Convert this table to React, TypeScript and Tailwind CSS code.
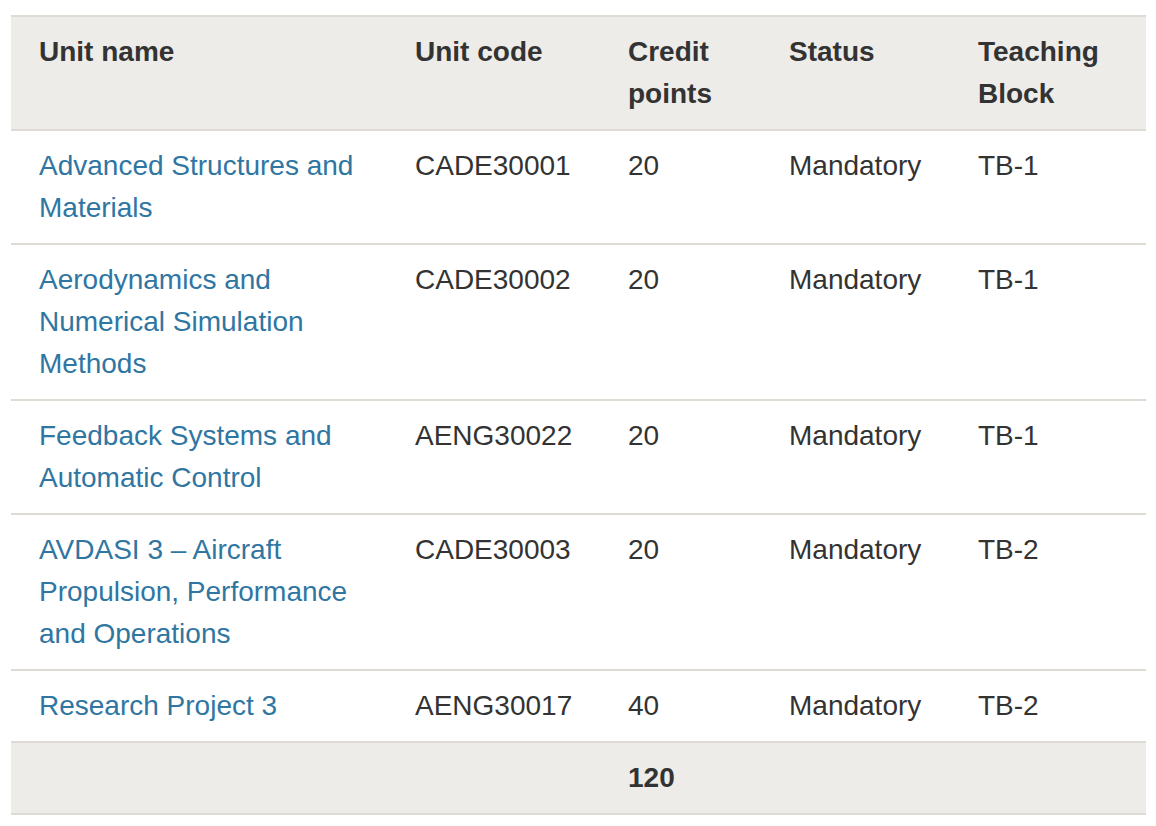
import React from "react";

type Unit = {
  name: string;
  code: string;
  credits: number;
  status: string;
  block: string;
};

const units: Unit[] = [
  { name: "Advanced Structures and Materials", code: "CADE30001", credits: 20, status: "Mandatory", block: "TB-1" },
  { name: "Aerodynamics and Numerical Simulation Methods", code: "CADE30002", credits: 20, status: "Mandatory", block: "TB-1" },
  { name: "Feedback Systems and Automatic Control", code: "AENG30022", credits: 20, status: "Mandatory", block: "TB-1" },
  { name: "AVDASI 3 \u2013 Aircraft Propulsion, Performance and Operations", code: "CADE30003", credits: 20, status: "Mandatory", block: "TB-2" },
  { name: "Research Project 3", code: "AENG30017", credits: 40, status: "Mandatory", block: "TB-2" },
];

const cell = "pl-[28px] pr-[20px] pt-[14px] pb-[14px] align-top text-left";

const App = () => {
  return (
    <div
      className="min-h-[826px] bg-white pt-[15px] text-[28px] leading-[42px] text-[#333333]"
      style={{ fontFamily: '"Liberation Sans", Arial, Helvetica, sans-serif' }}
    >
      <table className="ml-[11px] w-[1135px] table-fixed border-collapse">
        <colgroup>
          <col className="w-[376px]" />
          <col className="w-[213px]" />
          <col className="w-[161px]" />
          <col className="w-[189px]" />
          <col className="w-[196px]" />
        </colgroup>
        <thead>
          <tr className="border-y-2 border-[#dddbd3] bg-[#edece8] font-bold">
            <th className={cell}>Unit name</th>
            <th className={cell}>Unit code</th>
            <th className={cell}>Credit points</th>
            <th className={cell}>Status</th>
            <th className={cell}>Teaching Block</th>
          </tr>
        </thead>
        <tbody>
          {units.map((u, i) => (
            <tr key={i} className="border-b-2 border-[#dddbd3]">
              <td className={cell}>
                <a href="#" className="text-[#2f76a2]">
                  {u.name}
                </a>
              </td>
              <td className={cell}>{u.code}</td>
              <td className={cell}>{u.credits}</td>
              <td className={cell}>{u.status}</td>
              <td className={cell}>{u.block}</td>
            </tr>
          ))}
        </tbody>
        <tfoot>
          <tr className="border-b-2 border-[#dddbd3] bg-[#edece8] font-bold">
            <td className={cell}></td>
            <td className={cell}></td>
            <td className={cell}>120</td>
            <td className={cell}></td>
            <td className={cell}></td>
          </tr>
        </tfoot>
      </table>
    </div>
  );
};

export default App;
